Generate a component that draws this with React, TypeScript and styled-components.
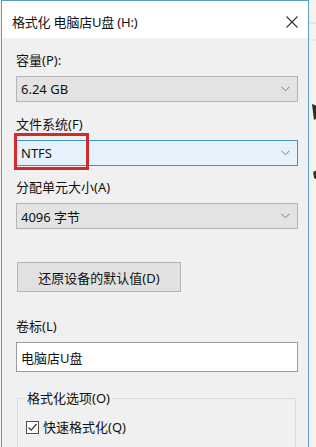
import styled, { createGlobalStyle } from "styled-components";

const GlobalStyle = createGlobalStyle`
  html, body {
    margin: 0;
    padding: 0;
    background: #f6f3ef;
  }
  body {
    font-family: "Noto Sans", "Noto Sans CJK SC", sans-serif;
    font-size: 13px;
    color: #111;
  }
`;

const Page = styled.div`
  display: flex;
  width: 316px;
  height: 447px;
  overflow: hidden;
`;

const Dialog = styled.div`
  margin-left: 1px;
  width: 306px;
  height: 460px;
  flex: none;
  border: 1px solid #5d9cc2;
  background: #f0f0f0;
  display: flex;
  flex-direction: column;
`;

const TitleBar = styled.div`
  height: 37px;
  background: #fff;
  display: flex;
  align-items: center;
  justify-content: space-between;
  padding: 0 9px 0 10px;
`;

const Title = styled.span`
  line-height: 16px;
  padding-top: 4px;
  letter-spacing: -0.2px;
`;

const Close = styled.span`
  display: flex;
  width: 14px;
  height: 14px;
  padding-top: 4px;
`;

const Body = styled.div`
  display: flex;
  flex-direction: column;
  padding: 14px 10px 0 14px;
`;

const Label = styled.div<{ $gap?: number }>`
  line-height: 16px;
  margin-top: ${(p) => p.$gap ?? 0}px;
  margin-bottom: 8px;
`;

const Combo = styled.div<{ $active?: boolean }>`
  position: relative;
  height: 26px;
  box-sizing: border-box;
  display: flex;
  align-items: center;
  justify-content: space-between;
  padding: 0 7px 0 4px;
  background: ${(p) => (p.$active ? "#e5f1fb" : "#e3e3e3")};
  border: 1px solid ${(p) => (p.$active ? "#3d93c6" : "#b4b4b4")};
`;

const Highlight = styled.span`
  position: absolute;
  left: -3px;
  top: -8px;
  width: 75px;
  height: 37px;
  box-sizing: border-box;
  border: 3px solid #cf2a2e;
`;

const Button = styled.div`
  margin-top: 33px;
  margin-left: 1px;
  width: 164px;
  height: 30px;
  box-sizing: border-box;
  border: 1px solid #b4b4b4;
  background: #e1e1e1;
  display: flex;
  align-items: center;
  justify-content: center;
`;

const TextBox = styled.div`
  height: 30px;
  box-sizing: border-box;
  border: 1px solid #9a9a9a;
  background: #fff;
  display: flex;
  align-items: center;
  padding-left: 4px;
`;

const Group = styled.fieldset`
  margin: 18px 2px 0 1px;
  padding: 13px 8px 20px 8px;
  border: 1px solid #dadada;
  border-bottom: none;
`;

const Legend = styled.legend`
  padding: 0 2px;
  margin-left: -1px;
  line-height: 16px;
`;

const CheckRow = styled.label`
  display: flex;
  align-items: center;
  gap: 4px;
  line-height: 16px;
`;

const Box = styled.span`
  width: 13px;
  height: 13px;
  box-sizing: border-box;
  border: 1px solid #4d4d4d;
  background: #fff;
  display: flex;
  align-items: center;
  justify-content: center;
`;

const Backdrop = styled.div`
  flex: 1;
`;

const Chevron = () => (
  <svg width="9" height="6" viewBox="0 0 9 6">
    <polyline points="0.5,0.8 4.5,4.8 8.5,0.8" fill="none" stroke="#7a7a7a" strokeWidth="1" />
  </svg>
);

export default function App() {
  return (
    <Page>
      <GlobalStyle />
      <Dialog>
        <TitleBar>
          <Title>格式化 电脑店U盘 (H:)</Title>
          <Close>
            <svg width="14" height="14" viewBox="0 0 14 14">
              <path d="M1.5 1.5 L12.5 12.5 M12.5 1.5 L1.5 12.5" stroke="#333" strokeWidth="1.1" fill="none" />
            </svg>
          </Close>
        </TitleBar>
        <Body>
          <Label>容量(P):</Label>
          <Combo>
            <span>6.24 GB</span>
            <Chevron />
          </Combo>

          <Label $gap={14}>文件系统(F)</Label>
          <Combo $active>
            <span>NTFS</span>
            <Chevron />
            <Highlight />
          </Combo>

          <Label $gap={13}>分配单元大小(A)</Label>
          <Combo>
            <span>4096 字节</span>
            <Chevron />
          </Combo>

          <Button>还原设备的默认值(D)</Button>

          <Label $gap={26}>卷标(L)</Label>
          <TextBox>电脑店U盘</TextBox>

          <Group>
            <Legend>格式化选项(O)</Legend>
            <CheckRow>
              <Box>
                <svg width="11" height="11" viewBox="0 0 11 11">
                  <polyline points="1.5,5.5 4.2,8.2 9.5,2" fill="none" stroke="#333" strokeWidth="1.2" />
                </svg>
              </Box>
              快速格式化(Q)
            </CheckRow>
          </Group>
        </Body>
      </Dialog>
      <Backdrop>
        <svg width="8" height="447" viewBox="0 0 8 447">
          <line x1="0" y1="23" x2="8" y2="23" stroke="#d4d4d4" />
          <line x1="0" y1="40" x2="8" y2="40" stroke="#e0e0e0" />
          <path d="M3 104 L8 106 L8 118 L5 120 Z" fill="#2c2c2c" />
          <path d="M4 172 L8 170 L8 180 L5 178 Z" fill="#333" />
        </svg>
      </Backdrop>
    </Page>
  );
}
